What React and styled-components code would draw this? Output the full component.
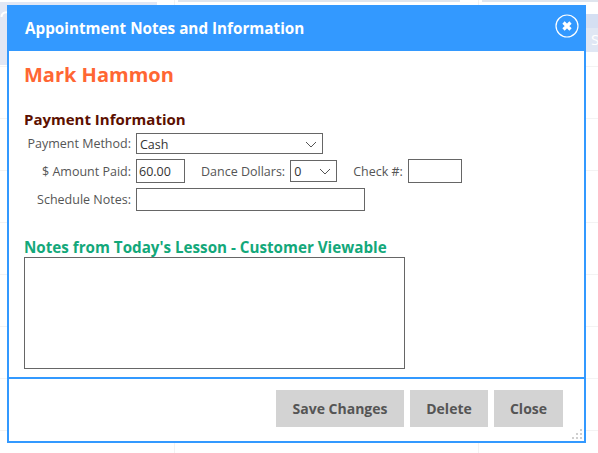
import React from "react";
import styled, { createGlobalStyle } from "styled-components";

const Global = createGlobalStyle`
    html, body {
        margin: 0;
        padding: 0;
        background: #fff;
    }
    body {
        font-family: "Open Sans", "Noto Sans", sans-serif;
    }
`

function Field({ label, width, children }) {
    return (
        <FieldWrap>
            <Label $width={width}>{label}</Label>
            {children}
        </FieldWrap>
    )
}

function Chevron() {
    return (
        <svg width="12" height="7" viewBox="0 0 12 7" fill="none">
            <path d="M1 1l5 5 5-5" stroke="#555" strokeWidth="1" />
        </svg>
    )
}

function App() {
    return (
        <Page>
            <Global />
            <Backdrop>
                <DayColumn $width={174}>
                    <DayHead>
                        <svg width="10" height="12" viewBox="0 0 10 12" fill="none">
                            <path d="M1.5 8a4.5 4.5 0 0 1 8-3" stroke="#fff" strokeWidth="2" />
                        </svg>
                    </DayHead>
                </DayColumn>
                <DayColumn $width={304} $line>
                    <TopStrip $left={3} $right={18} />
                </DayColumn>
                <DayColumn $line>
                    <TopStrip $left={3} />
                    <HeadBand />
                    <HeadLabel>S</HeadLabel>
                </DayColumn>
            </Backdrop>
            <Dialog>
                <TitleBar>
                    <Title>Appointment Notes and Information</Title>
                    <CloseIcon aria-label="close">
                        <svg width="26" height="26" viewBox="0 0 26 26" fill="none">
                            <circle cx="13" cy="13" r="11" stroke="#fff" strokeWidth="1.2" />
                            <path d="M9.5 9.5l7 7M16.5 9.5l-7 7" stroke="#fff" strokeWidth="3.2" />
                        </svg>
                    </CloseIcon>
                </TitleBar>
                <Body>
                    <Name>Mark Hammon</Name>
                    <SectionTitle>Payment Information</SectionTitle>
                    <Row>
                        <Field label="Payment Method:" width={107}>
                            <Select $width={187}>Cash<Chevron /></Select>
                        </Field>
                    </Row>
                    <Row $top={5}>
                        <Field label="$ Amount Paid:" width={107}>
                            <Input $width={49} $height={24} defaultValue="60.00" />
                        </Field>
                        <Field label="Dance Dollars:">
                            <Select $width={47} $height={22}>0<Chevron /></Select>
                        </Field>
                        <Field label="Check #:">
                            <Input $width={54} $height={24} />
                        </Field>
                    </Row>
                    <Row $top={5}>
                        <Field label="Schedule Notes:" width={107}>
                            <Input $width={229} $height={23} />
                        </Field>
                    </Row>
                    <NotesTitle>Notes from Today's Lesson - Customer Viewable</NotesTitle>
                    <Notes />
                </Body>
                <Footer>
                    <Button $width={128}>Save Changes</Button>
                    <Button $width={78}>Delete</Button>
                    <Button $width={69}>Close</Button>
                </Footer>
                <Grip>
                    <svg width="11" height="11" viewBox="0 0 11 11" fill="#cfcfcf">
                        <rect x="8" y="0" width="2" height="2" />
                        <rect x="4" y="4" width="2" height="2" />
                        <rect x="8" y="4" width="2" height="2" />
                        <rect x="0" y="8" width="2" height="2" />
                        <rect x="4" y="8" width="2" height="2" />
                        <rect x="8" y="8" width="2" height="2" />
                    </svg>
                </Grip>
            </Dialog>
        </Page>
    )
}

const Page = styled.div`
    position: relative;
    width: 598px;
    height: 453px;
    overflow: hidden;
    background: #fff;
`

const Backdrop = styled.div`
    display: flex;
    height: 100%;
    background-image: repeating-linear-gradient(
        to bottom,
        #f3f3f3 0,
        #f3f3f3 1px,
        transparent 1px,
        transparent 52px
    );
    background-position: 0 66px;
    background-repeat: no-repeat;
    background-size: 100% 100%;
`

const DayColumn = styled.div`
    position: relative;
    box-sizing: border-box;
    ${(p) => (p.$width ? `width: ${p.$width}px;` : "flex: 1;")}
    ${(p) => p.$line && "border-left: 1px solid #f2f2f2;"}
`

const DayHead = styled.div`
    margin-top: 2px;
    width: 157px;
    height: 63px;
    padding-top: 7px;
    box-sizing: border-box;
    background: #e2e7f4;
    display: flex;
    align-items: flex-start;
`

const TopStrip = styled.div`
    height: 2px;
    margin: 0 ${(p) => p.$right || 0}px 0 ${(p) => p.$left || 0}px;
    background: #dfe5ee;
`

const HeadBand = styled.div`
    margin-top: 12px;
    height: 14px;
    background: #d5dff2;
    border-bottom: 24px solid #e0e7f4;
`

const HeadLabel = styled.span`
    position: absolute;
    top: 29px;
    left: 112px;
    color: #fff;
    font-size: 15px;
`

const Dialog = styled.div`
    position: absolute;
    top: 5px;
    left: 7px;
    width: 579px;
    height: 438px;
    box-sizing: border-box;
    border: 2px solid #3399ff;
    border-top: 0;
    background: #fff;
    display: flex;
    flex-direction: column;
`

const TitleBar = styled.div`
    height: 46px;
    margin: 0 -2px;
    padding: 0 5px 0 18px;
    background: #3399ff;
    display: flex;
    align-items: center;
    justify-content: space-between;
    flex: none;
`

const Title = styled.div`
    color: #fff;
    font-size: 15.25px;
    font-weight: 700;
`

const CloseIcon = styled.div`
    display: flex;
    margin: -4px 1px 0 0;
`

const Body = styled.div`
    flex: 1;
    padding: 0 15px;
`

const Name = styled.div`
    margin-top: 10px;
    height: 28px;
    line-height: 28px;
    font-size: 20px;
    font-weight: 700;
    color: #ff6633;
`

const SectionTitle = styled.div`
    margin-top: 19px;
    height: 22px;
    line-height: 22px;
    font-size: 15px;
    font-weight: 700;
    color: #5c1000;
    margin-bottom: 3px;
`

const Row = styled.div`
    margin-top: ${(p) => p.$top || 0}px;
    display: flex;
    align-items: center;
    gap: 16px;
`

const FieldWrap = styled.div`
    display: flex;
    align-items: center;
    gap: 5px;
`

const Label = styled.label`
    ${(p) => p.$width && `width: ${p.$width}px;`}
    text-align: right;
    font-size: 12.5px;
    color: #555;
    white-space: nowrap;
`

const Select = styled.div`
    width: ${(p) => p.$width}px;
    height: ${(p) => p.$height || 21}px;
    box-sizing: border-box;
    border: 1px solid #666;
    padding: 1px 5px 0 3px;
    display: flex;
    align-items: center;
    justify-content: space-between;
    font-size: 12.5px;
    color: #333;
`

const Input = styled.input`
    width: ${(p) => p.$width}px;
    height: ${(p) => p.$height}px;
    box-sizing: border-box;
    border: 1px solid #666;
    padding: 0 2px;
    margin: 0;
    font-family: inherit;
    font-size: 12.5px;
    color: #333;
    outline: none;
`

const NotesTitle = styled.div`
    margin-top: 26px;
    height: 20px;
    line-height: 20px;
    font-size: 15.2px;
    font-weight: 700;
    color: #13a87a;
`

const Notes = styled.div`
    width: 381px;
    height: 112px;
    box-sizing: border-box;
    border: 1px solid #666;
`

const Footer = styled.div`
    height: 64px;
    box-sizing: border-box;
    border-top: 2px solid #3399ff;
    padding: 11px 21px 0 0;
    display: flex;
    justify-content: flex-end;
    align-items: flex-start;
    gap: 6px;
    flex: none;
`

const Button = styled.button`
    width: ${(p) => p.$width}px;
    height: 37px;
    padding: 0;
    border: 0;
    background: #d3d3d3;
    color: #555;
    font-family: inherit;
    font-size: 14px;
    font-weight: 700;
`

const Grip = styled.div`
    position: absolute;
    right: 1px;
    bottom: 1px;
    display: flex;
`

export default App
